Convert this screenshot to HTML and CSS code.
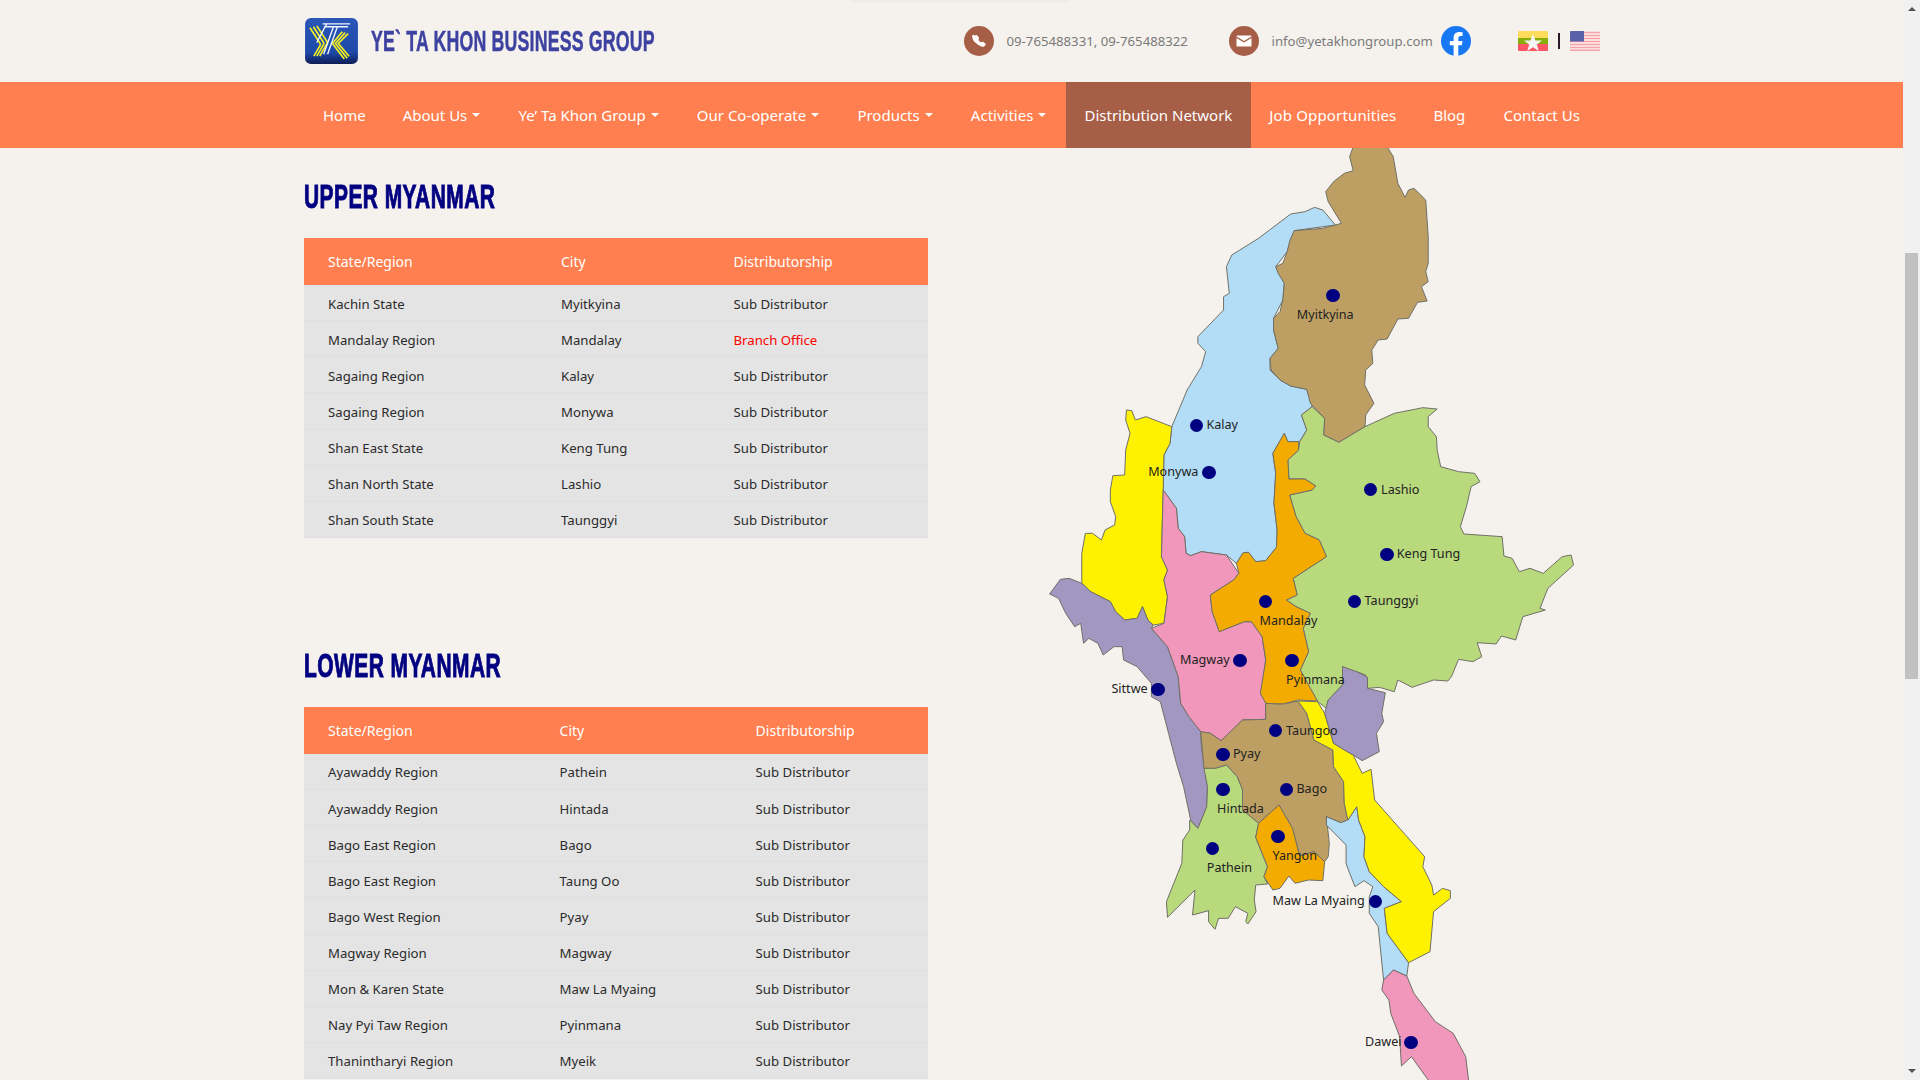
FILE: index.html
```html
<!DOCTYPE html>
<html lang="en">
<head>
<meta charset="utf-8">
<title>Distribution Network - Ye` Ta Khon Business Group</title>
<link rel="stylesheet" href="styles.css">
</head>
<body>
<div class="app">
  <div class="page">
    <div class="top-shadow"></div>
    <header class="topbar">
      <div class="container topbar-in">
        <a class="brand" href="#">
          <svg class="logo" viewBox="0 0 54 47" aria-hidden="true">
            <defs><linearGradient id="lg" x1="0" y1="0" x2="0" y2="1"><stop offset="0" stop-color="#2a57b8"/><stop offset=".75" stop-color="#1d49a8"/><stop offset="1" stop-color="#0d1c55"/></linearGradient></defs>
            <rect width="54" height="47" rx="6" fill="url(#lg)"/>
            <g fill="none" stroke="#f4f01e" stroke-width="1.700">
              <path d="M5 10l11 17M8.500 9l11 17M12 8l11 17"/>
              <path d="M16 27L9 39M19.500 26L12 39M23 25L15 39"/>
              <path d="M38 14L28 26l12 16M41 15L31 26l12 15M44 16L34 26l11 13"/>
            </g>
            <g fill="none" stroke="#f2f5ff" stroke-width="1.400">
              <path d="M18 6h28M20 9h24"/>
              <path d="M29 9L19 37M33 9L23 37"/>
              <path d="M22 6L12 25"/>
            </g>
          </svg>
          <span class="brand-box"><span class="brand-name">YE` TA KHON BUSINESS GROUP</span></span>
        </a>
        <div class="contacts">
          <div class="contact contact-phone">
            <span class="circle">
              <svg class="ic" viewBox="0 0 16 16"><path d="M3.650 1.300a1.700 1.700 0 0 1 2.500.200l1.300 1.700c.4.500.5 1.100.4 1.700l-.4 1.500c-.1.300 0 .6.200.8l2 2c.2.200.5.300.8.200l1.500-.4c.6-.1 1.200 0 1.700.4l1.700 1.300c.8.600.9 1.800.2 2.500l-.8.800c-.9.900-2.200 1.300-3.400.9-3-1-5.700-2.800-7.900-5C2.200 9.400.4 6.700-.3 3.700c-.4-1.200 0-2.500.9-3.400z" fill="#fff" transform="translate(1.500 1.500) scale(.82)"/></svg>
            </span>
            <span class="contact-text">09-765488331, 09-765488322</span>
          </div>
          <div class="contact contact-mail">
            <span class="circle">
              <svg class="ic" viewBox="0 0 16 16"><path d="M1 2.500h14a.5.5 0 0 1 .5.5v.6L8 8 .5 3.600V3a.5.5 0 0 1 .5-.5z" fill="#fff"/><path d="M.5 5l7.500 4.400L15.500 5v8a.5.5 0 0 1-.5.5H1a.5.5 0 0 1-.5-.5z" fill="#fff"/></svg>
            </span>
            <span class="contact-text">info@yetakhongroup.com</span>
          </div>
          <svg class="fb" viewBox="0 0 30 30" aria-label="Facebook">
            <circle cx="15" cy="15" r="15" fill="#1877f2"/>
            <path d="M20.800 19.300l.7-4.300h-4.200v-2.800c0-1.200.6-2.300 2.400-2.300h1.900V6.200s-1.700-.3-3.300-.3c-3.400 0-5.700 2.100-5.700 5.800V15H8.800v4.300h3.800v10.500a15 15 0 0 0 4.700 0V19.300z" fill="#fff"/>
          </svg>
        </div>
        <div class="langs">
          <svg class="flag" viewBox="0 0 30 20" aria-label="Myanmar">
            <rect width="30" height="7" fill="#fddc5c"/><rect y="7" width="30" height="6" fill="#86ad0a"/><rect y="13" width="30" height="7" fill="#fd5566"/>
            <path d="M15 3l2.500 6.500 6.500.1-5.200 4 1.900 6.400-5.700-3.800-5.700 3.800 1.900-6.400-5.200-4 6.500-.1z" fill="#f5f5f5"/>
          </svg>
          <span class="lang-sep"></span>
          <svg class="flag" viewBox="0 0 30 20" aria-label="English">
            <rect width="30" height="20" fill="#fbf0ee"/>
            <path d="M0 1.500h30M0 4.500h30M0 7.500h30M0 10.500h30M0 13.500h30M0 16.500h30M0 19.300h30" stroke="#f89fa6" stroke-width="1.500"/>
            <rect width="14" height="10.500" fill="#5a61ab"/>
          </svg>
        </div>
      </div>
    </header>

    <nav class="nav">
      <div class="container nav-in">
        <a class="nav-link" href="#">Home</a>
        <a class="nav-link drop" href="#">About Us</a>
        <a class="nav-link drop" href="#">Ye’ Ta Khon Group</a>
        <a class="nav-link drop" href="#">Our Co-operate</a>
        <a class="nav-link drop" href="#">Products</a>
        <a class="nav-link drop" href="#">Activities</a>
        <a class="nav-link active" href="#">Distribution Network</a>
        <a class="nav-link job" href="#">Job Opportunities</a>
        <a class="nav-link blog" href="#">Blog</a>
        <a class="nav-link" href="#">Contact Us</a>
      </div>
    </nav>

    <main class="container content">
      <section class="region region-upper">
        <h2 class="region-title"><span>UPPER MYANMAR</span></h2>
        <table class="dist t-upper">
          <thead><tr><th>State/Region</th><th>City</th><th>Distributorship</th></tr></thead>
          <tbody>
            <tr><td>Kachin State</td><td>Myitkyina</td><td>Sub Distributor</td></tr>
            <tr><td>Mandalay Region</td><td>Mandalay</td><td class="branch">Branch Office</td></tr>
            <tr><td>Sagaing Region</td><td>Kalay</td><td>Sub Distributor</td></tr>
            <tr><td>Sagaing Region</td><td>Monywa</td><td>Sub Distributor</td></tr>
            <tr><td>Shan East State</td><td>Keng Tung</td><td>Sub Distributor</td></tr>
            <tr><td>Shan North State</td><td>Lashio</td><td>Sub Distributor</td></tr>
            <tr><td>Shan South State</td><td>Taunggyi</td><td>Sub Distributor</td></tr>
          </tbody>
        </table>
      </section>
      <section class="region region-lower">
        <h2 class="region-title"><span>LOWER MYANMAR</span></h2>
        <table class="dist t-lower">
          <thead><tr><th>State/Region</th><th>City</th><th>Distributorship</th></tr></thead>
          <tbody>
            <tr><td>Ayawaddy Region</td><td>Pathein</td><td>Sub Distributor</td></tr>
            <tr><td>Ayawaddy Region</td><td>Hintada</td><td>Sub Distributor</td></tr>
            <tr><td>Bago East Region</td><td>Bago</td><td>Sub Distributor</td></tr>
            <tr><td>Bago East Region</td><td>Taung Oo</td><td>Sub Distributor</td></tr>
            <tr><td>Bago West Region</td><td>Pyay</td><td>Sub Distributor</td></tr>
            <tr><td>Magway Region</td><td>Magway</td><td>Sub Distributor</td></tr>
            <tr><td>Mon &amp; Karen State</td><td>Maw La Myaing</td><td>Sub Distributor</td></tr>
            <tr><td>Nay Pyi Taw Region</td><td>Pyinmana</td><td>Sub Distributor</td></tr>
            <tr><td>Thanintharyi Region</td><td>Myeik</td><td>Sub Distributor</td></tr>
          </tbody>
        </table>
      </section>
    </main>

    <div class="map">
      <svg class="map-svg" viewBox="0 0 1568 2820" preserveAspectRatio="none" aria-hidden="true">
        <polygon class="r blue" points="855,255 820,210 797,202 770,215 730,222 640,295 565,345 550,380 558,460 542,470 542,510 470,590 470,610 492,635 480,680 440,750 397,860 392,910 375,945 373,1050 410,1105 415,1165 433,1190 437,1240 450,1247 480,1235 550,1245 578,1270 597,1238 612,1237 632,1265 660,1262 690,1222 692,1170 683,1090 688,1000 680,940 712,880 722,905 755,905 775,870 760,825 790,800 775,748 730,738 700,720 672,690 672,655 695,625 682,570 682,535 708,480 712,430 688,380 720,335 740,272"/>
        <polygon class="r tan" points="905,20 895,50 905,92 880,100 850,125 828,155 835,185 872,250 820,265 740,272 728,300 720,335 708,370 688,380 695,400 712,430 708,480 700,515 682,535 682,570 695,625 672,655 675,690 700,720 730,738 775,748 785,790 825,835 822,885 865,907 938,860 940,825 963,790 937,735 940,690 960,670 957,630 975,600 1000,597 1030,537 1060,535 1085,487 1112,483 1096,440 1115,425 1108,395 1115,370 1115,290 1108,180 1075,145 1060,150 1050,172 1030,130 1017,50 1000,20"/>
        <polygon class="r yellow" points="270,810 285,812 295,840 325,830 397,860 392,910 375,945 373,1050 368,1250 385,1290 375,1320 385,1370 375,1450 345,1455 330,1440 315,1400 300,1435 265,1440 240,1415 225,1385 170,1355 145,1330 145,1240 155,1180 175,1180 200,1200 210,1170 237,1155 240,1130 225,1085 225,1050 232,1007 265,1005 268,930 280,880 268,840"/>
        <polygon class="r purple" points="55,1362 85,1318 110,1315 145,1330 170,1355 225,1385 240,1415 265,1440 300,1435 315,1400 330,1440 345,1455 340,1465 385,1520 415,1610 422,1690 445,1730 478,1775 480,1820 497,1940 495,2000 470,2065 450,2040 430,1940 410,1870 388,1780 365,1685 340,1670 340,1630 300,1580 262,1560 258,1520 235,1520 205,1545 190,1510 165,1495 150,1510 142,1450 125,1460 100,1420 80,1375"/>
        <polygon class="r pink" points="373,1050 410,1105 415,1165 433,1190 437,1240 450,1247 480,1235 550,1245 585,1300 570,1320 505,1365 510,1415 530,1475 600,1445 620,1445 650,1490 660,1560 650,1640 660,1690 660,1738 595,1740 535,1802 505,1780 478,1775 445,1730 422,1690 415,1610 385,1520 340,1465 375,1450 385,1370 375,1320 385,1290 368,1250"/>
        <polygon class="r green" points="790,800 825,835 822,885 865,907 938,860 1020,820 1100,803 1140,807 1115,830 1115,860 1138,890 1140,930 1150,980 1200,995 1245,1000 1260,1025 1235,1040 1222,1100 1205,1160 1215,1182 1322,1190 1327,1248 1350,1255 1370,1295 1400,1285 1437,1300 1490,1250 1515,1245 1522,1275 1450,1345 1428,1405 1443,1410 1380,1430 1360,1500 1320,1488 1305,1512 1252,1508 1265,1550 1240,1565 1200,1558 1180,1610 1170,1623 1130,1620 1070,1642 1030,1620 1020,1655 978,1642 945,1645 940,1605 915,1595 900,1605 875,1580 875,1635 835,1680 830,1705 800,1680 757,1590 780,1535 765,1465 785,1420 745,1400 718,1380 748,1365 737,1315 830,1250 810,1200 770,1180 745,1130 727,1065 790,1050 800,1038 770,1017 725,1017 722,960 752,930 755,905 775,870 760,825"/>
        <polygon class="r orange" points="712,880 722,905 752,905 752,930 722,960 725,1017 770,1017 800,1038 790,1050 727,1065 745,1130 770,1180 810,1200 830,1250 737,1315 748,1365 718,1380 745,1400 785,1420 765,1465 780,1535 757,1590 805,1683 750,1680 710,1692 690,1692 660,1690 645,1660 660,1560 650,1490 620,1445 600,1445 530,1475 510,1415 505,1365 570,1320 585,1300 578,1270 597,1238 612,1237 632,1265 660,1262 690,1222 692,1170 683,1090 688,1000 680,940"/>
        <g transform="translate(0 1380)">
          <polygon class="r tan" points="478,395 505,400 535,422 595,360 660,358 660,310 690,312 710,312 750,303 775,340 795,420 848,450 850,500 878,545 880,610 890,660 870,668 830,650 838,730 835,770 825,785 795,755 755,768 735,685 697,615 640,670 595,630 595,570 580,530 550,495 520,505 487,505"/>
          <polygon class="r green" points="487,505 520,505 550,495 580,530 595,570 595,630 640,670 632,712 665,800 655,830 665,852 632,855 628,900 633,935 610,972 604,965 610,940 575,920 555,955 528,955 518,988 500,965 500,932 455,945 462,870 385,952 382,905 425,790 428,720 447,690 447,660 470,685 495,620 497,560"/>
          <polygon class="r orange" points="697,615 735,685 755,768 795,755 825,785 820,842 780,840 742,850 725,828 700,865 680,870 655,830 665,800 632,712 640,670"/>
          <polygon class="r blue" points="915,620 920,660 938,710 935,770 950,815 990,860 1040,905 992,925 1000,1000 1060,1088 1055,1128 1018,1110 990,1140 975,980 950,940 950,890 960,860 935,842 910,860 895,820 885,790 885,735 830,675 830,650 870,668 890,660"/>
          <polygon class="r yellow" points="750,303 805,305 825,340 850,430 905,465 930,520 955,508 965,600 1105,770 1100,800 1125,855 1130,885 1155,865 1177,872 1177,895 1130,935 1120,1055 1060,1088 1000,1000 992,925 1040,905 990,860 950,815 935,770 938,710 920,660 915,620 890,660 880,610 878,545 850,500 848,450 795,420 775,340"/>
          <polygon class="r purple" points="875,200 915,215 945,232 945,265 995,278 985,340 990,365 970,400 978,455 930,482 905,465 880,450 850,430 825,340 835,300 875,255"/>
          <polygon class="r pink" points="1018,1110 1055,1128 1075,1180 1135,1265 1185,1300 1220,1370 1228,1440 1240,1500 1150,1500 1115,1440 1068,1370 1040,1398 1035,1310 1010,1240 1005,1200 985,1170 990,1140"/>
        </g>
      </svg>
      <i class="dot" style="left:302.900px;top:155.300px"></i><span class="pin-label" style="left:266.800px;top:175.700px">Myitkyina</span>
      <i class="dot" style="left:166.400px;top:285.300px"></i><span class="pin-label" style="left:176.400px;top:285.700px">Kalay</span>
      <i class="dot" style="left:178.900px;top:332.300px"></i><span class="pin-label" style="left:118.200px;top:332.700px">Monywa</span>
      <i class="dot" style="left:340.700px;top:349.300px"></i><span class="pin-label" style="left:351.100px;top:350.800px">Lashio</span>
      <i class="dot" style="left:356.800px;top:414.300px"></i><span class="pin-label" style="left:366.800px;top:414.700px">Keng Tung</span>
      <i class="dot" style="left:324.600px;top:461.700px"></i><span class="pin-label" style="left:334.600px;top:461.700px">Taunggyi</span>
      <i class="dot" style="left:235.400px;top:461.700px"></i><span class="pin-label" style="left:229.600px;top:481.700px">Mandalay</span>
      <i class="dot" style="left:210px;top:520.300px"></i><span class="pin-label" style="left:150px;top:520.700px">Magway</span>
      <i class="dot" style="left:261.800px;top:520.300px"></i><span class="pin-label" style="left:256.100px;top:540.700px">Pyinmana</span>
      <i class="dot" style="left:127.900px;top:549.300px"></i><span class="pin-label" style="left:81.400px;top:549.800px">Sittwe</span>
      <i class="dot" style="left:245.700px;top:590.300px"></i><span class="pin-label" style="left:256.100px;top:591.700px">Taungoo</span>
      <i class="dot" style="left:192.900px;top:614.300px"></i><span class="pin-label" style="left:202.900px;top:614.700px">Pyay</span>
      <i class="dot" style="left:192.900px;top:649.300px"></i><span class="pin-label" style="left:187.100px;top:669.700px">Hintada</span>
      <i class="dot" style="left:256.400px;top:649.300px"></i><span class="pin-label" style="left:266.400px;top:650px">Bago</span>
      <i class="dot" style="left:248.200px;top:696.300px"></i><span class="pin-label" style="left:242.500px;top:717px">Yangon</span>
      <i class="dot" style="left:182.500px;top:708.300px"></i><span class="pin-label" style="left:176.800px;top:728.700px">Pathein</span>
      <i class="dot" style="left:345.400px;top:761.300px"></i><span class="pin-label" style="left:242.500px;top:761.700px">Maw La Myaing</span>
      <i class="dot" style="left:381.100px;top:902.300px"></i><span class="pin-label" style="left:335px;top:902.700px">Dawei</span>
    </div>
  </div>
  <div class="scrollbar" aria-hidden="true">
    <span class="arrow arrow-up"></span>
    <div class="track"><div class="thumb"></div></div>
    <span class="arrow arrow-down"></span>
  </div>
</div>
</body>
</html>
```
FILE: styles.css
```css
* { box-sizing: border-box; }
html, body { margin: 0; height: 1080px; overflow: hidden; }
body {
  background: #f5f2ed;
  color: #222;
  font-family: "Noto Sans", "Open Sans", sans-serif;
  font-size: 13.200px;
}
a { color: inherit; text-decoration: none; }

.app { display: flex; height: 1080px; }
.page { position: relative; width: 1903px; height: 1080px; overflow: hidden; }

.container { width: 1296px; margin-left: 303.500px; }

.top-shadow {
  position: absolute; left: 850px; top: 0; width: 220px; height: 4px;
  background: linear-gradient(180deg, #ecebe6, #f5f2ed);
}

/* top bar */
.topbar { height: 82px; position: relative; }
.topbar-in { display: flex; align-items: center; height: 82px; }
.brand { display: flex; align-items: center; width: 660px; flex: none; }
.logo { width: 53px; height: 46px; flex: none; margin: -1px 0 0 1px; }
.brand-box { display: block; width: 284px; margin-left: 13px; }
.brand-name {
  display: inline-block;
  font-family: "Liberation Sans", sans-serif;
  font-weight: 700;
  font-size: 30px;
  line-height: 30px;
  color: #3d42a0;
  white-space: nowrap;
  transform-origin: left center;
  transform: scaleX(.592);
  letter-spacing: .3px;
  -webkit-text-stroke: .5px #3d42a0;
}
.contacts { display: flex; align-items: center; flex: none; }
.contact { display: flex; align-items: center; flex: none; }
.contact-phone { width: 265px; }
.contact-mail { width: 212px; }
.circle {
  width: 30px; height: 30px; border-radius: 50%;
  background: #a65e46;
  display: flex; align-items: center; justify-content: center; flex: none;
}
.ic { width: 16px; height: 16px; }
.contact-text { margin-left: 13px; color: #7a7a7a; font-size: 13.200px; white-space: nowrap; }
.fb { width: 30px; height: 30px; flex: none; }
.langs { display: flex; align-items: center; margin-left: 47px; flex: none; }
.flag { width: 30px; height: 20px; display: block; border-radius: 1px; }
.lang-sep { width: 2px; height: 16px; background: #2a1a2a; margin: 0 10px; }

/* nav */
.nav { position: relative; z-index: 2; height: 66px; background: #ff7f50; }
.nav-in { display: flex; height: 66px; padding-left: 1px; }
.nav-link {
  display: flex; align-items: center;
  padding: 0 18.500px;
  color: #fff;
  font-size: 15px;
  white-space: nowrap;
}
.nav-link.active { background: #a65e46; }
.nav-link.job { letter-spacing: .15px; }
.nav-link.blog { padding-right: 19.700px; }
.drop { padding-right: 19.650px; }
.drop::after {
  content: "";
  margin-left: 5px;
  border-top: 4.800px solid #fff;
  border-left: 4.800px solid transparent;
  border-right: 4.800px solid transparent;
}

/* tables */
.content { position: relative; }
.region { width: 624px; }
.region-upper { padding-top: 31px; }
.region-lower { padding-top: 110px; }
.region-title {
  margin: 0;
  height: 36px;
  font-family: "Liberation Sans", sans-serif;
  font-weight: 700;
  font-size: 33px;
  line-height: 36px;
  color: #000080;
  white-space: nowrap;
}
.region-title span {
  display: inline-block;
  transform-origin: left center;
  transform: scaleX(.635);
  -webkit-text-stroke: 1px #000080;
  letter-spacing: .7px;
}
.dist { display: block; width: 624px; margin-top: 23px; }
.dist thead, .dist tbody { display: block; }
.dist tr { display: grid; }
.t-upper tr { grid-template-columns: 233px 172.500px 1fr; }
.t-lower tr { grid-template-columns: 231.600px 196px 1fr; }
.dist th {
  display: block;
  height: 47px;
  background: #ff7f50;
  color: #fff;
  font-weight: 400;
  font-size: 14px;
  line-height: 47px;
  text-align: left;
  padding: 0 0 0 24.500px;
}
.dist td {
  display: block;
  height: 36.140px;
  background: #e4e4e4;
  border-bottom: 1px solid #dfe0e4;
  color: #2b2b2b;
  line-height: 35px;
  padding: 1.500px 0 0 24.500px;
  white-space: nowrap;
}
.dist td.branch { color: #f00; }

/* map */
.map { position: absolute; left: 1030px; top: 140px; width: 560px; height: 940px; }
.map-svg { position: absolute; left: 0; top: 0; width: 560px; height: 940px; filter: blur(.35px); }
.r { stroke: #6f6f66; stroke-width: 1px; vector-effect: non-scaling-stroke; stroke-linejoin: round; }
.tan { fill: #bd9f63; }
.blue { fill: #b3ddf7; }
.yellow { fill: #fff200; }
.purple { fill: #a197c1; }
.pink { fill: #f097bb; }
.green { fill: #b9d97d; }
.orange { fill: #f4ab00; }
.dot {
  position: absolute; width: 13.500px; height: 13.500px; margin: -6.750px 0 0 -6.750px;
  border-radius: 50%; background: #000080;
}
.pin-label {
  position: absolute; transform: translateY(-50%);
  margin-top: -1px;
  font-size: 12.600px; line-height: 18px; color: #222; white-space: nowrap;
}

/* scrollbar */
.scrollbar { width: 17px; height: 1080px; background: #f1f1f1; display: flex; flex-direction: column; align-items: center; flex: none; }
.arrow { flex: none; width: 0; height: 0; border-left: 4px solid transparent; border-right: 4px solid transparent; }
.arrow-up { border-bottom: 4px solid #505050; margin: 7px 0 6px; }
.arrow-down { border-top: 4px solid #505050; margin: 6px 0 7px; }
.track { flex: 1; width: 13px; padding-top: 236px; }
.thumb { height: 426px; background: #c1c1c1; }
```
